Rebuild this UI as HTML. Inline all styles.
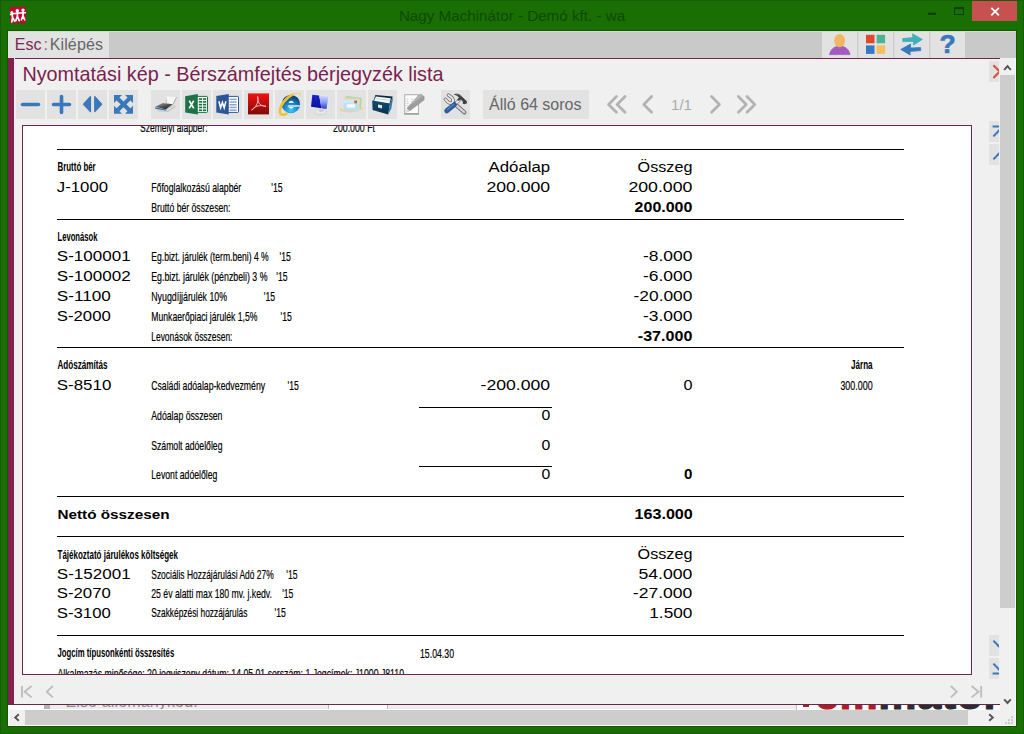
<!DOCTYPE html><html lang="hu"><head><meta charset="utf-8"><title>Nagy Machinátor - Demó kft. - wa</title><style>
html,body{margin:0;padding:0}
body{width:1024px;height:734px;overflow:hidden;background:#196f04;position:relative;font-family:"Liberation Sans",sans-serif}
.a{position:absolute}
#win{left:0;top:0;width:1024px;height:734px;box-sizing:border-box;border:1px solid #175c06}
#title{left:0;top:0.6px;width:1024px;height:30px;text-align:center;color:#0f4a06;font-size:15.2px;line-height:30px;white-space:nowrap}
#menubar{left:8px;top:32px;width:1008px;height:26px;background:#c9c9c9}
#esc{left:8px;top:32px;width:101px;height:26px;background:#e2e2e2;font-size:16px;line-height:26px;white-space:nowrap}
#panel{left:8px;top:58px;width:992px;height:652px;background:#f0f0f0}
#ptop{left:8px;top:58px;width:992px;height:1px;background:#642a4c;box-shadow:0 1px 0 #f9ecf5}
#pleft{left:8px;top:58px;width:6px;height:647px;background:#842050;box-shadow:1px 0 0 #f9ecf5}
#pbot{left:8px;top:704px;width:992px;height:1px;background:#642a4c}
#ptitle{left:22.4px;top:63.4px;font-size:19.8px;line-height:22px;color:#7a1f4e;white-space:nowrap}
.tb{position:absolute;top:90px;width:29px;height:29px;background:#e2e2e2}
.mb{position:absolute;top:32px;width:35px;height:26px;background:#e2e2e2}
#page{left:22px;top:125px;width:948px;height:548px;background:#fff;border:1px solid #642a4c;box-shadow:0 0 0 1px #f9ecf5}
.sb{position:absolute;left:989px;width:10px;background:#e2e2e2;overflow:hidden}
#vs{left:1000px;top:58px;width:15px;height:652px;background:#f0f0f0}
#vthumb{left:1000px;top:75px;width:15px;height:533px;background:#cdcdcd}
#hs{left:9px;top:710px;width:991px;height:15px;background:#f0f0f0}
#hthumb{left:25px;top:710px;width:943px;height:15px;background:#cdcdcd}
#corner{left:1000px;top:710px;width:15px;height:15px;background:#f0f0f0}
#strip{left:8px;top:705px;width:992px;height:5px;background:#ededed;overflow:hidden}
svg{position:absolute;overflow:visible}
</style></head><body>
<div id="win" class="a"></div>
<div id="title" class="a">Nagy Machinátor - Demó kft. - wa</div>
<div class="a" style="left:7px;top:30px;width:1010px;height:697px;background:#175406"></div>
<div class="a" style="left:8px;top:31px;width:1008px;height:695px;background:#fff"></div>
<div id="menubar" class="a"></div>
<div class="a" style="left:8px;top:31px;width:1008px;height:1px;background:#cbe1c5"></div>
<div id="esc" class="a"><span style="color:#7a2a52;margin-left:6.8px">Esc</span><span style="color:#8b6f80;margin-left:2px">:</span><span style="color:#666;margin-left:1.8px;letter-spacing:0.12px">Kilépés</span></div>
<div id="panel" class="a"></div>
<div id="ptop" class="a"></div><div id="pleft" class="a"></div>
<div id="ptitle" class="a">Nyomtatási kép - Bérszámfejtés bérjegyzék lista</div>
<div class="tb" style="left:16px"></div>
<div class="tb" style="left:47px"></div>
<div class="tb" style="left:78px"></div>
<div class="tb" style="left:109px"></div>
<div class="tb" style="left:151px"></div>
<div class="tb" style="left:182px"></div>
<div class="tb" style="left:213px"></div>
<div class="tb" style="left:244px"></div>
<div class="tb" style="left:275px"></div>
<div class="tb" style="left:306px"></div>
<div class="tb" style="left:337px"></div>
<div class="tb" style="left:368px"></div>
<div class="tb" style="left:441px"></div>
<div class="tb" style="left:483px;width:106px;font-size:16px;line-height:29px;color:#666;white-space:nowrap"><span style="margin-left:6px">Álló 64 soros</span></div>
<div class="mb" style="left:822px"></div>
<div class="mb" style="left:858px"></div>
<div class="mb" style="left:894px"></div>
<div class="mb" style="left:930px"></div>
<div class="a" style="left:930px;top:32px;width:35px;height:26px;text-align:center;font-weight:bold;font-size:26.5px;line-height:25px;color:#3b78b8;-webkit-text-stroke:0.7px #3b78b8">?</div>
<div class="a" style="left:671px;top:95px;width:21px;text-align:center;font-size:15px;line-height:19px;color:#ababab;white-space:nowrap">1/1</div>
<div id="page" class="a"></div>
<div class="sb" style="top:61px;height:21px"></div>
<div class="sb" style="top:121px;height:21px"></div>
<div class="sb" style="top:144px;height:21px"></div>
<div class="sb" style="top:635px;height:21px"></div>
<div class="sb" style="top:658px;height:21px"></div>
<div id="vs" class="a"></div><div id="vthumb" class="a"></div>
<div id="strip" class="a"><div class="a" style="left:0;top:0;width:36px;height:5px;background:#fff"></div><div class="a" style="left:36px;top:0;width:6px;height:4px;background:#b4b4b4"></div><div class="a" style="left:57.4px;top:-10.6px;font-size:16px;line-height:16px;color:#8c8c8c;white-space:nowrap;letter-spacing:0.15px">Első állományköd:</div><div class="a" style="left:320px;top:0;width:58px;height:5px;background:#fff;border-left:1px solid #b9b9b9;border-right:1px solid #b9b9b9"></div><div class="a" style="left:0;top:4px;width:788px;height:1px;background:#fbfbfb"></div><div class="a" style="left:788px;top:0;width:204px;height:5px;background:#fff;border-left:1px solid #bdbdbd;overflow:hidden"><div class="a" style="left:6px;top:0;width:6px;height:2px;background:#b01c2a"></div><div class="a" style="left:18px;top:-32px;font-size:43px;line-height:43px;font-weight:bold;white-space:nowrap;letter-spacing:0.6px;-webkit-text-stroke:1.2px;color:#2b2b33"><span style="color:#b01c2a">em</span>mator</div></div></div>
<div id="pbot" class="a"></div>
<div id="hs" class="a"></div><div id="hthumb" class="a"></div><div id="corner" class="a"></div>
<svg id="doc" style="left:23px;top:126px;overflow:hidden" width="948" height="548" viewBox="23 126 948 548" font-family="Liberation Sans, sans-serif" fill="#000">
<rect x="57" y="149" width="847" height="1" fill="#000"/>
<rect x="57" y="219" width="847" height="1" fill="#000"/>
<rect x="57" y="347" width="847" height="1" fill="#000"/>
<rect x="57" y="496" width="847" height="1" fill="#000"/>
<rect x="57" y="536" width="847" height="1" fill="#000"/>
<rect x="57" y="635" width="847" height="1" fill="#000"/>
<rect x="419" y="407" width="133" height="1" fill="#000"/>
<rect x="419" y="466" width="133" height="1" fill="#000"/>
<text x="140" y="131.6" font-size="13.3" textLength="67.5" lengthAdjust="spacingAndGlyphs" stroke="#000" stroke-width="0.2">Személyi alapbér:</text>
<text x="333" y="131.6" font-size="13.3" textLength="42" lengthAdjust="spacingAndGlyphs" stroke="#000" stroke-width="0.2">200.000 Ft</text>
<text x="57.5" y="171.15" font-size="13.3" textLength="38.2" lengthAdjust="spacingAndGlyphs" font-weight="bold">Bruttó bér</text>
<text x="550.2" y="172.1" font-size="14" textLength="61.7" lengthAdjust="spacingAndGlyphs" text-anchor="end">Adóalap</text>
<text x="692.4" y="172.1" font-size="14" textLength="54.8" lengthAdjust="spacingAndGlyphs" text-anchor="end">Összeg</text>
<text x="56.8" y="191.85" font-size="14" textLength="51.3" lengthAdjust="spacingAndGlyphs">J-1000</text>
<text x="151.25" y="191.65" font-size="13.3" textLength="90" lengthAdjust="spacingAndGlyphs" stroke="#000" stroke-width="0.2">Főfoglalkozású alapbér</text>
<text x="271.25" y="191.65" font-size="13.3" textLength="11.2" lengthAdjust="spacingAndGlyphs" stroke="#000" stroke-width="0.2">'15</text>
<text x="550.2" y="191.85" font-size="14" textLength="63.8" lengthAdjust="spacingAndGlyphs" text-anchor="end">200.000</text>
<text x="692.4" y="191.85" font-size="14" textLength="64" lengthAdjust="spacingAndGlyphs" text-anchor="end">200.000</text>
<text x="151.25" y="211.65" font-size="13.3" textLength="79.2" lengthAdjust="spacingAndGlyphs" stroke="#000" stroke-width="0.2">Bruttó bér összesen:</text>
<text x="692.4" y="211.85" font-size="14" textLength="57.8" lengthAdjust="spacingAndGlyphs" text-anchor="end" font-weight="bold">200.000</text>
<text x="57.5" y="241.15" font-size="13.3" textLength="40" lengthAdjust="spacingAndGlyphs" font-weight="bold">Levonások</text>
<text x="56.8" y="261.1" font-size="14" textLength="73.8" lengthAdjust="spacingAndGlyphs">S-100001</text>
<text x="151.25" y="260.9" font-size="13.3" textLength="117.5" lengthAdjust="spacingAndGlyphs" stroke="#000" stroke-width="0.2">Eg.bizt. járulék (term.beni) 4 %</text>
<text x="279.5" y="260.9" font-size="13.3" textLength="11.2" lengthAdjust="spacingAndGlyphs" stroke="#000" stroke-width="0.2">'15</text>
<text x="692.4" y="261.1" font-size="14" textLength="49.5" lengthAdjust="spacingAndGlyphs" text-anchor="end">-8.000</text>
<text x="56.8" y="281.1" font-size="14" textLength="73.8" lengthAdjust="spacingAndGlyphs">S-100002</text>
<text x="151.25" y="280.9" font-size="13.3" textLength="116.2" lengthAdjust="spacingAndGlyphs" stroke="#000" stroke-width="0.2">Eg.bizt. járulék (pénzbeli)  3 %</text>
<text x="276.25" y="280.9" font-size="13.3" textLength="11.2" lengthAdjust="spacingAndGlyphs" stroke="#000" stroke-width="0.2">'15</text>
<text x="692.4" y="281.1" font-size="14" textLength="49.5" lengthAdjust="spacingAndGlyphs" text-anchor="end">-6.000</text>
<text x="56.8" y="301.0" font-size="14" textLength="54.0" lengthAdjust="spacingAndGlyphs">S-1100</text>
<text x="151.25" y="300.8" font-size="13.3" textLength="75.8" lengthAdjust="spacingAndGlyphs" stroke="#000" stroke-width="0.2">Nyugdíjjárulék 10%</text>
<text x="263.75" y="300.8" font-size="13.3" textLength="11.2" lengthAdjust="spacingAndGlyphs" stroke="#000" stroke-width="0.2">'15</text>
<text x="692.4" y="301.0" font-size="14" textLength="58.8" lengthAdjust="spacingAndGlyphs" text-anchor="end">-20.000</text>
<text x="56.8" y="321.1" font-size="14" textLength="54.0" lengthAdjust="spacingAndGlyphs">S-2000</text>
<text x="151.25" y="320.9" font-size="13.3" textLength="106.2" lengthAdjust="spacingAndGlyphs" stroke="#000" stroke-width="0.2">Munkaerőpiaci járulék 1,5%</text>
<text x="280.5" y="320.9" font-size="13.3" textLength="11.2" lengthAdjust="spacingAndGlyphs" stroke="#000" stroke-width="0.2">'15</text>
<text x="692.4" y="321.1" font-size="14" textLength="49.5" lengthAdjust="spacingAndGlyphs" text-anchor="end">-3.000</text>
<text x="151.25" y="340.9" font-size="13.3" textLength="81.2" lengthAdjust="spacingAndGlyphs" stroke="#000" stroke-width="0.2">Levonások összesen:</text>
<text x="692.4" y="340.8" font-size="14" textLength="54.6" lengthAdjust="spacingAndGlyphs" text-anchor="end" font-weight="bold">-37.000</text>
<text x="57.5" y="369.4" font-size="13.3" textLength="50" lengthAdjust="spacingAndGlyphs" font-weight="bold">Adószámítás</text>
<text x="872.6" y="369.1" font-size="13.3" textLength="21.6" lengthAdjust="spacingAndGlyphs" text-anchor="end" font-weight="bold">Járna</text>
<text x="56.8" y="390.2" font-size="14" textLength="54.5" lengthAdjust="spacingAndGlyphs">S-8510</text>
<text x="151.25" y="390.0" font-size="13.3" textLength="113.8" lengthAdjust="spacingAndGlyphs" stroke="#000" stroke-width="0.2">Családi adóalap-kedvezmény</text>
<text x="287.5" y="390.0" font-size="13.3" textLength="11.2" lengthAdjust="spacingAndGlyphs" stroke="#000" stroke-width="0.2">'15</text>
<text x="550.2" y="390.3" font-size="14" textLength="69.7" lengthAdjust="spacingAndGlyphs" text-anchor="end">-200.000</text>
<text x="692.4" y="390.3" font-size="14" textLength="9" lengthAdjust="spacingAndGlyphs" text-anchor="end">0</text>
<text x="872.6" y="390.4" font-size="13.3" textLength="32.2" lengthAdjust="spacingAndGlyphs" text-anchor="end" stroke="#000" stroke-width="0.2">300.000</text>
<text x="151.25" y="419.9" font-size="13.3" textLength="71.2" lengthAdjust="spacingAndGlyphs" stroke="#000" stroke-width="0.2">Adóalap összesen</text>
<text x="550.2" y="420.0" font-size="14" textLength="8.8" lengthAdjust="spacingAndGlyphs" text-anchor="end">0</text>
<text x="151.25" y="449.9" font-size="13.3" textLength="71.2" lengthAdjust="spacingAndGlyphs" stroke="#000" stroke-width="0.2">Számolt adóelőleg</text>
<text x="550.2" y="450.0" font-size="14" textLength="8.8" lengthAdjust="spacingAndGlyphs" text-anchor="end">0</text>
<text x="151.25" y="479.2" font-size="13.3" textLength="66.2" lengthAdjust="spacingAndGlyphs" stroke="#000" stroke-width="0.2">Levont adóelőleg</text>
<text x="550.2" y="479.4" font-size="14" textLength="8.8" lengthAdjust="spacingAndGlyphs" text-anchor="end">0</text>
<text x="692.4" y="479.4" font-size="14" textLength="8.4" lengthAdjust="spacingAndGlyphs" text-anchor="end" font-weight="bold">0</text>
<text x="57.5" y="518.5" font-size="13.3" textLength="112" lengthAdjust="spacingAndGlyphs" font-weight="bold">Nettó összesen</text>
<text x="692.8" y="518.8" font-size="14" textLength="58.3" lengthAdjust="spacingAndGlyphs" text-anchor="end" font-weight="bold">163.000</text>
<text x="57.5" y="558.6" font-size="13.3" textLength="120.5" lengthAdjust="spacingAndGlyphs" font-weight="bold">Tájékoztató járulékos költségek</text>
<text x="692.4" y="559.1" font-size="14" textLength="54.8" lengthAdjust="spacingAndGlyphs" text-anchor="end">Összeg</text>
<text x="56.8" y="578.8" font-size="14" textLength="73.8" lengthAdjust="spacingAndGlyphs">S-152001</text>
<text x="151.25" y="578.6" font-size="13.3" textLength="122.5" lengthAdjust="spacingAndGlyphs" stroke="#000" stroke-width="0.2">Szociális Hozzájárulási Adó 27%</text>
<text x="286.25" y="578.6" font-size="13.3" textLength="11.2" lengthAdjust="spacingAndGlyphs" stroke="#000" stroke-width="0.2">'15</text>
<text x="692.4" y="578.8" font-size="14" textLength="54" lengthAdjust="spacingAndGlyphs" text-anchor="end">54.000</text>
<text x="56.8" y="598.2" font-size="14" textLength="54.0" lengthAdjust="spacingAndGlyphs">S-2070</text>
<text x="151.25" y="598.0" font-size="13.3" textLength="120.7" lengthAdjust="spacingAndGlyphs" stroke="#000" stroke-width="0.2">25 év alatti max 180 mv. j.kedv.</text>
<text x="282.2" y="598.0" font-size="13.3" textLength="11.2" lengthAdjust="spacingAndGlyphs" stroke="#000" stroke-width="0.2">'15</text>
<text x="692.4" y="598.2" font-size="14" textLength="59.6" lengthAdjust="spacingAndGlyphs" text-anchor="end">-27.000</text>
<text x="56.8" y="617.6" font-size="14" textLength="54.0" lengthAdjust="spacingAndGlyphs">S-3100</text>
<text x="151.25" y="617.4" font-size="13.3" textLength="96.2" lengthAdjust="spacingAndGlyphs" stroke="#000" stroke-width="0.2">Szakképzési hozzájárulás</text>
<text x="274.5" y="617.4" font-size="13.3" textLength="11.2" lengthAdjust="spacingAndGlyphs" stroke="#000" stroke-width="0.2">'15</text>
<text x="692.4" y="617.6" font-size="14" textLength="43.1" lengthAdjust="spacingAndGlyphs" text-anchor="end">1.500</text>
<text x="57.5" y="657.4" font-size="13.3" textLength="116.7" lengthAdjust="spacingAndGlyphs" font-weight="bold">Jogcím típusonkénti összesítés</text>
<text x="420" y="657.9" font-size="13.3" textLength="34" lengthAdjust="spacingAndGlyphs" stroke="#000" stroke-width="0.2">15.04.30</text>
<text x="57.5" y="678.0" font-size="13.3" textLength="346.5" lengthAdjust="spacingAndGlyphs" stroke="#000" stroke-width="0.2">Alkalmazás minősége: 20 jogviszony dátum: 14.05.01 sorszám:  1 Jogcímek: J1000 J8110</text>
</svg>
<svg id="ico" style="left:0;top:0" width="1024" height="734" viewBox="0 0 1024 734">
<defs><linearGradient id="gpdf" x1="0" y1="0" x2="0" y2="1"><stop offset="0" stop-color="#ee1410"/><stop offset="0.55" stop-color="#b80c0c"/><stop offset="1" stop-color="#7e0808"/></linearGradient><linearGradient id="gmon" x1="0" y1="0" x2="1" y2="0"><stop offset="0" stop-color="#1a2ab8"/><stop offset="0.45" stop-color="#1426c4"/><stop offset="0.5" stop-color="#9fb0f2"/><stop offset="1" stop-color="#5f78e6"/></linearGradient><linearGradient id="gmonL" x1="0" y1="0" x2="0" y2="1"><stop offset="0" stop-color="#1c24cc"/><stop offset="1" stop-color="#0a1298"/></linearGradient><linearGradient id="gmonR" x1="0" y1="0" x2="0" y2="1"><stop offset="0" stop-color="#d6dcfb"/><stop offset="0.5" stop-color="#8f9cf0"/><stop offset="1" stop-color="#2c3cc8"/></linearGradient><radialGradient id="gie" cx="0.5" cy="0.85" r="0.85"><stop offset="0" stop-color="#3cc8f2"/><stop offset="0.5" stop-color="#1a80c0"/><stop offset="1" stop-color="#0a3468"/></radialGradient><linearGradient id="gprn" x1="0" y1="0" x2="0.8" y2="1"><stop offset="0" stop-color="#a8a8a8"/><stop offset="0.6" stop-color="#4a4a4a"/><stop offset="1" stop-color="#262626"/></linearGradient><linearGradient id="gbox" x1="0" y1="0" x2="0" y2="1"><stop offset="0" stop-color="#114b73"/><stop offset="1" stop-color="#0a3050"/></linearGradient></defs>
<path d="M22.5 104.5H38.5" stroke="#3a79b9" stroke-width="3.6" stroke-linecap="round" fill="none"/>
<path d="M53.5 104.5H69.5M61.5 96.5V112.5" stroke="#3a79b9" stroke-width="3.6" stroke-linecap="round" fill="none"/>
<path d="M83.6 104.2L90.4 96.8V111.6Z M101.6 104.2L94.8 96.8V111.6Z" fill="#3a79b9" stroke="#3a79b9" stroke-width="1.4" stroke-linejoin="round"/>
<path d="M114 95h8l-8 8zM133 95h-8l8 8zM114 113.8h8l-8-8zM133 113.8h-8l8-8z" fill="#3a79b9"/>
<path d="M117 98L130 110.8M130 98L117 110.8" stroke="#3a79b9" stroke-width="4" fill="none"/>
<g><path d="M166.4 103L166.9 96.3L176.5 97.2L173.1 104.2Z" fill="#f6f6f6"/><path d="M176.5 97.2L173.1 104.4" stroke="#a2a2a2" stroke-width="0.9" fill="none"/><path d="M166.4 99.6V103" stroke="#b0b0b0" stroke-width="0.8" fill="none"/><path d="M155.4 106.8L162.8 103L172.8 104.2L166 109.4Z" fill="url(#gprn)"/><path d="M166 109.4L172.8 104.2L175.4 105.8L175.2 107.6L167.4 112.2Z" fill="#c6c6c6"/><path d="M167.2 110.4L174.6 105.6" stroke="#ededed" stroke-width="0.8" fill="none"/><path d="M155 107.2L166 109.4L166.4 110.8L155.2 108.8Z" fill="#3f6ea6"/><path d="M156.4 109.4L166.4 110.9L167.4 112.2L158 111.2Z" fill="#bfcdd6"/></g>
<rect x="196.5" y="96.4" width="11" height="16" rx="0.8" fill="#fff" stroke="#1f7246" stroke-width="1"/>
<rect x="198.8" y="98.2" width="3.4" height="1.7" fill="#1f7246"/><rect x="203" y="98.2" width="3.2" height="1.7" fill="#1f7246"/>
<rect x="198.8" y="101" width="3.4" height="1.7" fill="#1f7246"/><rect x="203" y="101" width="3.2" height="1.7" fill="#1f7246"/>
<rect x="198.8" y="103.8" width="3.4" height="1.7" fill="#1f7246"/><rect x="203" y="103.8" width="3.2" height="1.7" fill="#1f7246"/>
<rect x="198.8" y="106.6" width="3.4" height="1.7" fill="#1f7246"/><rect x="203" y="106.6" width="3.2" height="1.7" fill="#1f7246"/>
<rect x="198.8" y="109.4" width="3.4" height="1.7" fill="#1f7246"/><rect x="203" y="109.4" width="3.2" height="1.7" fill="#1f7246"/>
<path d="M185.2 96.2L197.8 94V114.6L185.2 112.6Z" fill="#1f7246"/>
<path d="M189.2 100.6L193.8 108.4M193.8 100.6L189.2 108.4" stroke="#fff" stroke-width="1.7" fill="none"/>
<rect x="227.5" y="96.4" width="11" height="16" rx="0.8" fill="#fff" stroke="#2b579a" stroke-width="1"/>
<rect x="229.6" y="98.6" width="7" height="1.5" fill="#8aa2cc"/>
<rect x="229.6" y="101.3" width="7" height="1.5" fill="#8aa2cc"/>
<rect x="229.6" y="104" width="7" height="1.5" fill="#8aa2cc"/>
<rect x="229.6" y="106.7" width="7" height="1.5" fill="#8aa2cc"/>
<rect x="229.6" y="109.4" width="7" height="1.5" fill="#8aa2cc"/>
<path d="M216.3 96.1L228.8 94V114.6L216.3 112.6Z" fill="#2b579a"/>
<path d="M218.9 101.2L220.6 107.8L222.4 102.4L224.2 107.8L225.9 101.2" stroke="#fff" stroke-width="1.5" fill="none" stroke-linejoin="miter"/>
<rect x="248" y="93.4" width="21" height="21" fill="url(#gpdf)"/>
<path d="M251.6 110.2C254.5 108.8 257.2 104.6 258 100.8C258.4 98.8 257.6 96.4 257.6 96.4C257.6 96.4 257.4 99.6 258.4 102C259.6 104.8 262.6 106.4 266 106.4C264 105.4 260.2 105.2 257 106.2C254.4 107 252.4 108.8 251.6 110.2Z" fill="none" stroke="#f4b8b8" stroke-width="1" stroke-linejoin="round"/>
<circle cx="290.9" cy="104.1" r="9.2" fill="url(#gie)"/>
<path d="M288.7 102.9C288.9 100 293.5 100 293.7 102.9Z" fill="#e6f2fa"/>
<path d="M287.8 105.2H299.8V106.8H287.8Z" fill="#cbe5f5"/>
<path d="M288.6 107.1C289.4 109.2 292.8 109.2 293.6 107.1Z" fill="#e8f4fb"/>
<path d="M286.4 113.6C283 115.8 279.6 114.8 279.9 110.6C280.2 105 286 97.6 292.6 94.6" fill="none" stroke="#f1c02d" stroke-width="2.5" stroke-linecap="round"/>
<path d="M292.6 94.6C296.8 92.4 300.8 92.8 300.6 96" fill="none" stroke="#f3cf7c" stroke-width="1.1" stroke-linecap="round"/>
<ellipse cx="320.5" cy="112.4" rx="6.4" ry="3" fill="#d6d6d6"/><ellipse cx="320.5" cy="112" rx="5.2" ry="2.1" fill="#e8e8e8"/>
<path d="M318.4 108.2L323.8 109L323 112H319.4Z" fill="#d0d0d0"/>
<path d="M311.7 93.8L329.6 95.9L327.2 109.8L310.1 107.3Z" fill="#e3e7f6"/>
<path d="M312.3 94.7L319.2 95.5L321.4 108.3L311 106.7Z" fill="url(#gmonL)"/>
<path d="M319.2 95.5L328.4 96.5L326.5 108.9L321.4 108.3Z" fill="url(#gmonR)"/>
<path d="M340.2 109.4C346 112.6 356 112 362.4 108.4" fill="none" stroke="#f3d47c" stroke-width="1.5" stroke-linecap="round"/>
<path d="M345.6 95.8L361.8 98L361 108.8L345.2 107.4Z" fill="#b5d7a2"/>
<path d="M344.4 97.4L360 98.8L359.6 109.6L344 108.6Z" fill="#f0d2a4"/>
<path d="M343.6 99.5H358.8V111.4H343.6Z" fill="#bcdff4"/>
<path d="M343.6 99.5H358.8V103.4H343.6Z" fill="#cde8f8"/>
<rect x="354.3" y="100.5" width="2.8" height="2.8" fill="#c5692b"/>
<rect x="346.8" y="104.3" width="8.2" height="3.3" fill="#f8fcff"/>
<path d="M341 110.2C345 111.6 350 111.9 354 111.4" fill="none" stroke="#f3d47c" stroke-width="1.2" stroke-linecap="round" opacity="0.85"/>
<path d="M375.4 95L392.6 96.6L390.4 104L373.4 101Z" fill="#0d2b44"/>
<path d="M375.8 96.4L390.8 98.2L389.4 104L373.8 101.4Z" fill="#f3f6f8"/>
<path d="M376.2 98.6L390 100.4" stroke="#c3ccd4" stroke-width="0.8"/>
<path d="M372.2 100.4L390 103.6L388.2 114.6L372.6 110Z" fill="url(#gbox)"/>
<path d="M390 103.6L393.2 96.4L391.4 108.2L388.2 114.6Z" fill="#2d7fa8"/>
<path d="M378 104.6L382.2 105.3L382 108.4L378 107.6Z" fill="#e8e4da"/>
<rect x="404.7" y="94.7" width="13.8" height="19" fill="#fbfbfb" stroke="#b4b4b4" stroke-width="1.1"/>
<path d="M404.2 113.9H419" stroke="#9c9c9c" stroke-width="1.5"/>
<path d="M406.6 99.2H408.4M411.2 99.2H413.4M406.6 101.4H408.4M411.2 101.4H412.6M406.6 103.5H408.4M406.6 105.6H408.2" stroke="#c9c9c9" stroke-width="0.9"/>
<path d="M405.8 112.4L407.4 107.2L418.4 95.2L421 93.8L424.6 96.8L424.4 100L410.8 110.6Z" fill="#9d9d9d"/>
<path d="M408.6 106.6L419 95.6L421 94.6L422.6 96Z" fill="#b4b4b4"/>
<path d="M405.8 112.4L407 108.6L409.6 111Z" fill="#e2e2e2"/>
<path d="M452.8 102.2L464.4 112.4" stroke="#777" stroke-width="4.2" stroke-linecap="round" fill="none"/>
<path d="M452.8 102.2L464.2 112.2" stroke="#d4d4d4" stroke-width="2.2" stroke-linecap="round" fill="none"/>
<path d="M448.4 95.1L452 97.7Q454.2 100.6 452.4 102.4Q450.2 104 448 102L445.2 99.2" stroke="#6a6a6a" stroke-width="3.3" fill="none" stroke-linecap="round" stroke-linejoin="round"/>
<path d="M448.4 95.1L452 97.7Q454.2 100.6 452.4 102.4Q450.2 104 448 102L445.2 99.2" stroke="#eaeaea" stroke-width="1.8" fill="none" stroke-linecap="round" stroke-linejoin="round"/>
<path d="M455 104.2L460 99.6" stroke="#8c8c8c" stroke-width="3.4" fill="none"/>
<path d="M455 104.2L460 99.6" stroke="#f6f6f6" stroke-width="1.8" fill="none"/>
<path d="M446.8 110.8L454.4 104.6" stroke="#2d5b9d" stroke-width="5" stroke-linecap="round" fill="none"/>
<path d="M447.4 109.6L453.6 104.4" stroke="#4f7fc0" stroke-width="1.4" stroke-linecap="round" fill="none"/>
<path d="M453.6 94.4C455.6 93.4 458.4 93.6 460.2 95L466.8 101.2L467 103.2L464.4 104.2L462.6 103.6L463 101.8L460.8 99.6L458.8 101L457.2 99.4L459 97.8C458.4 96.2 456 95 453.6 94.4Z" fill="#3f3f3f"/>
<path d="M456.4 94.6C458.4 94.4 459.6 95 460.6 96" stroke="#7a7a7a" stroke-width="0.7" fill="none"/>
<rect x="10" y="6.8" width="16" height="16.4" fill="#c3092f"/>
<g stroke="#fff" fill="none" stroke-linecap="round" stroke-width="1.7"><path d="M10.6 14.6L14.6 13.6L20 13L25.4 12.8" stroke-width="1.5"/><path d="M12 14L12.6 17.6M12.6 17.4L11.8 21.8M12.6 17.4L14.6 21.2"/><path d="M17.4 12.4V16.6M17.4 16.4L15.8 20.6M17.4 16.4L19.2 20.6"/><path d="M23 11.8V16M23 15.8L21.4 19.8M23 15.8L24.7 19.8"/></g>
<circle cx="11.8" cy="12.4" r="1.5" fill="#fff"/><circle cx="17.3" cy="10.8" r="1.7" fill="#fff"/><circle cx="23" cy="10.1" r="1.7" fill="#fff"/>
<rect x="972" y="1" width="45" height="20" fill="#c75050"/>
<path d="M991.3 7.9L998.9 15.3M998.9 7.9L991.3 15.3" stroke="#fff" stroke-width="1.8" fill="none"/>
<rect x="954.5" y="8.5" width="9" height="6" fill="none" stroke="#0f4206" stroke-width="1"/><rect x="954" y="7" width="10" height="2.2" fill="#0f4206"/>
<rect x="928" y="12.6" width="8" height="2.4" fill="#0f4206"/>
<path d="M829.6 54.6C830.4 49.4 834.2 46.2 839.8 46.2C845.4 46.2 849.2 49.4 850 54.6Z" fill="#a45bbf" stroke="#a45bbf" stroke-width="0.8" stroke-linejoin="round"/>
<ellipse cx="839.6" cy="40.6" rx="5.5" ry="6.6" fill="#f1b661"/>
<rect x="866" y="34.8" width="8.5" height="8.5" fill="#de4a2c"/><rect x="876.6" y="34.8" width="8.5" height="8.5" fill="#4db491"/><rect x="866" y="45.4" width="8.5" height="8.5" fill="#3679c2"/><rect x="876.6" y="45.4" width="8.5" height="8.5" fill="#f5bf62"/>
<path d="M902.6 38.6L913 37.6L912.4 33.8L922.4 39.4L913.6 45L913.4 41.4L902.8 41.6Z" fill="#3fb0b8" stroke="#3fb0b8" stroke-width="0.8" stroke-linejoin="round"/>
<path d="M920.6 47.6L910.4 48L910.6 44L900.8 49.4L910.2 55L910 51.4L920.8 50.6Z" fill="#3878bd" stroke="#3878bd" stroke-width="0.8" stroke-linejoin="round"/>
<rect x="857.5" y="32" width="1" height="26" fill="#d2d2d2"/>
<rect x="893.5" y="32" width="1" height="26" fill="#d2d2d2"/>
<rect x="929.5" y="32" width="1" height="26" fill="#d2d2d2"/>
<clipPath id="cr"><rect x="989" y="58" width="10" height="640"/></clipPath>
<g clip-path="url(#cr)" fill="none" stroke-width="2"><path d="M993.4 65.2L999.8 71.6L993.4 78" stroke="#d3553b" stroke-width="2.2"/><path d="M992.6 126.6H1002M993.4 136.4L1001 128.4" stroke="#3a79b9"/><path d="M993.4 159.4L1001 151.4" stroke="#3a79b9"/><path d="M993.4 640.6L1001 648.6" stroke="#3a79b9"/><path d="M993.4 663.6L1001 671.6M992.6 673.6H1002" stroke="#3a79b9"/></g>
<path d="M1004.2 69.8L1007.5 66.2L1010.8 69.8" stroke="#555" stroke-width="1.9" fill="none"/>
<path d="M1004.2 699.4L1007.5 703L1010.8 699.4" stroke="#555" stroke-width="1.9" fill="none"/>
<path d="M18.8 714.2L15.2 717.5L18.8 720.8" stroke="#555" stroke-width="1.9" fill="none"/>
<path d="M989.2 714.2L992.8 717.5L989.2 720.8" stroke="#555" stroke-width="1.9" fill="none"/>
<rect x="1011.2" y="716.2" width="1.7" height="1.7" fill="#bdbdbd"/>
<rect x="1008.1" y="719.2" width="1.7" height="1.7" fill="#bdbdbd"/>
<rect x="1011.2" y="719.2" width="1.7" height="1.7" fill="#bdbdbd"/>
<rect x="1005" y="722.2" width="1.7" height="1.7" fill="#bdbdbd"/>
<rect x="1008.1" y="722.2" width="1.7" height="1.7" fill="#bdbdbd"/>
<rect x="1011.2" y="722.2" width="1.7" height="1.7" fill="#bdbdbd"/>
<path d="M616.4 96.6L608.6 104.4L616.4 112.2M625 96.6L617.2 104.4L625 112.2" stroke="#b3b3b3" stroke-width="2.8" fill="none" stroke-linecap="round" stroke-linejoin="round"/>
<path d="M651.6 96.6L643.8 104.4L651.6 112.2" stroke="#b3b3b3" stroke-width="2.8" fill="none" stroke-linecap="round" stroke-linejoin="round"/>
<path d="M711.6 96.6L719.4 104.4L711.6 112.2" stroke="#b3b3b3" stroke-width="2.8" fill="none" stroke-linecap="round" stroke-linejoin="round"/>
<path d="M738.4 96.6L746.2 104.4L738.4 112.2M747 96.6L754.8 104.4L747 112.2" stroke="#b3b3b3" stroke-width="2.8" fill="none" stroke-linecap="round" stroke-linejoin="round"/>
<path d="M22 686V697.4M31.6 686L24.6 691.7L31.6 697.4" stroke="#bcbcbc" stroke-width="1.8" fill="none"/>
<path d="M52.8 686L46.8 691.7L52.8 697.4" stroke="#bcbcbc" stroke-width="1.8" fill="none"/>
<path d="M950.8 686L956.8 691.7L950.8 697.4" stroke="#bcbcbc" stroke-width="1.8" fill="none"/>
<path d="M971.6 686L978.6 691.7L971.6 697.4M981.2 686V697.4" stroke="#bcbcbc" stroke-width="1.8" fill="none"/>
</svg>
</body></html>
